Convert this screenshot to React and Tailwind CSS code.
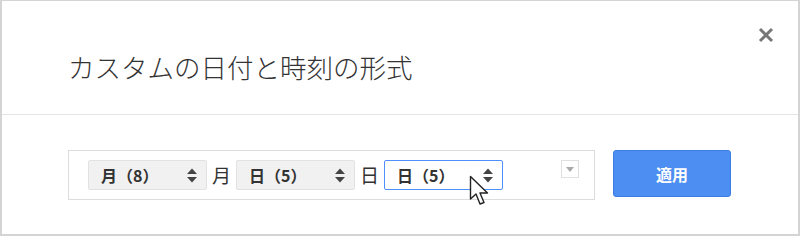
const font = { fontFamily: '"Noto Sans CJK JP", "Liberation Sans", sans-serif' };

function Spinner() {
  return (
    <svg width="12" height="17" viewBox="0 0 12 17" className="text-[#444]">
      <path d="M1 7 L6 1.5 L11 7 Z" fill="currentColor" />
      <path d="M1 10 L6 15.5 L11 10 Z" fill="currentColor" />
    </svg>
  );
}

function Select({ label, focused }) {
  return (
    <div
      className={
        'flex h-[30px] w-[119px] items-center justify-between rounded-[2px] border pl-[12px] pr-[8px] text-[16px] font-bold text-[#333] ' +
        (focused ? 'border-[#4d90fe] bg-white' : 'border-[#e2e2e2] bg-[#f1f1f1]')
      }
    >
      <span>{label}</span>
      <Spinner />
    </div>
  );
}

function Cursor() {
  return (
    <svg width="24" height="34" viewBox="0 0 24 34" className="absolute left-[467px] top-[174px]">
      <path
        d="M1.5 1.5 L1.5 24 L7 19 L11 29 L15 27.5 L11 18 L18.5 18 Z"
        fill="white"
        stroke="#222"
        strokeWidth="1.4"
        strokeLinejoin="round"
      />
    </svg>
  );
}

export default function App() {
  return (
    <div className="relative h-[236px] w-[800px] overflow-hidden border-x-2 border-t border-b-2 border-[#d4d4d4] bg-white" style={font}>
      <div className="relative h-[114px] border-b border-[#e4e4e4]">
        <h1 className="pl-[66px] pt-[49px] text-[26.5px] leading-[34px] font-light text-[#333]">カスタムの日付と時刻の形式</h1>
        <button className="absolute right-[24px] top-[26px] text-[#777]">
          <svg width="16" height="16" viewBox="0 0 16 16">
            <path d="M2 2 L14 14 M14 2 L2 14" stroke="currentColor" strokeWidth="3" />
          </svg>
        </button>
      </div>
      <div className="flex items-start pl-[66px] pt-[35px]">
        <div className="flex h-[50px] w-[527px] items-start border border-[#dcdcdc] pl-[19px] pt-[9px]">
          <Select label="月（8）" />
          <span className="mx-[5px] text-[19px] leading-[30px] text-[#333]">月</span>
          <Select label="日（5）" />
          <span className="mx-[5px] text-[19px] leading-[30px] text-[#333]">日</span>
          <Select label="日（5）" focused />
          <div className="ml-[58px] flex h-[18px] w-[18px] items-center justify-center border border-[#e0e0e0]">
            <svg width="8" height="5" viewBox="0 0 8 5">
              <path d="M0 0 L8 0 L4 5 Z" fill="#aaa" />
            </svg>
          </div>
        </div>
        <button className="ml-[18px] h-[47px] w-[118px] rounded-[3px] border border-[#3b7de0] bg-[#4d8ef2] text-[16px] font-bold text-white">
          適用
        </button>
      </div>
      <Cursor />
    </div>
  );
}
